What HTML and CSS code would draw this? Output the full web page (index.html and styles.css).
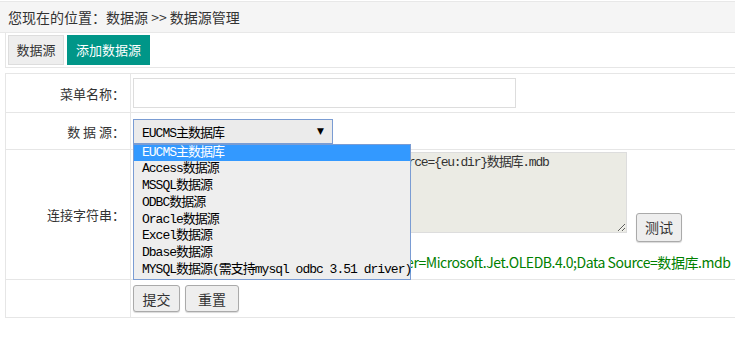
FILE: index.html
```html
<!DOCTYPE html>
<html lang="zh-CN">
<head>
  <meta charset="UTF-8" />
  <title>数据源管理</title>
  <link rel="stylesheet" href="styles.css">
</head>
<body>
  <div class="crumb">您现在的位置：数据源 &gt;&gt; 数据源管理</div>

  <div class="tabs">
    <a class="tab" href="#">数据源</a><a class="tab tab-on" href="#">添加数据源</a>
  </div>

  <table class="form">
    <tr class="row-name">
      <th>菜单名称：</th>
      <td><input class="txt" type="text" /></td>
    </tr>
    <tr class="row-src">
      <th>数 据 源：</th>
      <td>
        <div class="dd">
          <div class="dd-box">
            <span>EUCMS主数据库</span>
            <span class="dd-arrow">▼</span>
          </div>
          <!-- opened option list, drawn over the rows below -->
          <ul class="dd-list">
            <li class="on">EUCMS主数据库</li>
            <li>Access数据源</li>
            <li>MSSQL数据源</li>
            <li>ODBC数据源</li>
            <li>Oracle数据源</li>
            <li>Excel数据源</li>
            <li>Dbase数据源</li>
            <li>MYSQL数据源(需支持mysql odbc 3.51 driver)</li>
          </ul>
        </div>
      </td>
    </tr>
    <tr class="row-conn">
      <th>连接字符串：</th>
      <td>
        <textarea class="conn">Provider=Microsoft.Jet.OLEDB.4.0;Data Source={eu:dir}数据库.mdb</textarea><button class="btn btn-test" type="button">测试</button>
        <div class="tip">Access数据库连接字符串格式如下：Provider=Microsoft.Jet.OLEDB.4.0;Data Source=数据库.mdb</div>
      </td>
    </tr>
    <tr class="row-act">
      <th></th>
      <td>
        <button class="btn btn-ok" type="submit">提交</button><button class="btn btn-reset" type="reset">重置</button>
      </td>
    </tr>
  </table>
</body>
</html>
```

FILE: styles.css
```css
body {
  margin: 0;
  font-family: "Noto Sans CJK SC", sans-serif;
  font-size: 13px;
  color: #333;
  background: #fff;
  overflow: hidden;
}

/* breadcrumb strip */
.crumb {
  margin-top: 1px;
  height: 30px;
  line-height: 30px;
  padding-left: 8px;
  font-size: 14px;
  background: #f5f5f5;
  border-top: 1px solid #e8e8e8;
  border-bottom: 1px solid #e8e8e8;
}

.tabs {
  margin-left: 5px;
  width: 760px;
  padding: 2px 0 2px 2px;
  border-left: 1px solid #e6e6e6;
  border-bottom: 1px solid #e6e6e6;
  display: flex;
  gap: 3px;
}

.tab {
  display: block;
  height: 30px;
  line-height: 30px;
  box-sizing: border-box;
  text-decoration: none;
  font-size: 13px;
  color: #333;
}

.tab:first-child {
  width: 56px;
  text-align: center;
  background: #eee;
  border: 1px solid #ddd;
  line-height: 28px;
}

.tab-on {
  width: 83px;
  text-align: center;
  background: #009688;
  color: #fff;
}

/* form table */
.form {
  margin: 5px 0 0 5px;
  width: 760px;
  border-collapse: collapse;
}

.form th,
.form td {
  border: 1px solid #e6e6e6;
  vertical-align: middle;
  padding: 0 0 0 2px;
}

.form th {
  width: 119px;
  padding: 0 5px 0 0;
  text-align: right;
  font-weight: normal;
  font-size: 13px;
  color: #333;
}

.row-name { height: 39px; }
.row-src { height: 37px; }
.row-conn { height: 130px; }
.row-act { height: 38px; }

.txt {
  display: block;
  width: 383px;
  height: 30px;
  box-sizing: border-box;
  margin: 0;
  border: 1px solid #ddd;
  background: #fff;
}

/* fake open select */
.dd {
  position: relative;
  width: 200px;
}

.dd-box {
  height: 25px;
  box-sizing: border-box;
  border: 1px solid #7a9cd3;
  background: #ebebeb;
  display: flex;
  align-items: center;
  justify-content: space-between;
  padding: 0 8px 0 8px;
  font-family: "Liberation Mono", "Noto Sans CJK SC", monospace;
  font-size: 13px;
  letter-spacing: -1px;
  color: #000;
}

.dd-arrow {
  font-family: "DejaVu Sans", sans-serif;
  font-size: 9px;
  letter-spacing: 0;
}

.dd-list {
  position: absolute;
  top: 25px;
  left: 0;
  z-index: 5;
  width: 278px;
  box-sizing: border-box;
  margin: 0;
  padding: 0;
  list-style: none;
  border: 1px solid #7a9cd3;
  background: #eeeeee;
  font-family: "Liberation Mono", "Noto Sans CJK SC", monospace;
  font-size: 13px;
  letter-spacing: -1px;
  color: #000;
}

.dd-list li {
  height: 16.75px;
  line-height: 16.75px;
  padding-left: 8px;
  white-space: nowrap;
}

.dd-list li.on {
  background: #3399ff;
  color: #fff;
}

/* connection string cell */
.row-conn td {
  vertical-align: top;
  padding-top: 2px;
}

.conn {
  width: 494px;
  height: 81px;
  box-sizing: border-box;
  margin: 0;
  padding: 2px 3px;
  border: 1px solid #ddd;
  background: #ebebe4;
  font-family: "Liberation Mono", "Noto Sans CJK SC", monospace;
  font-size: 13px;
  line-height: 16px;
  letter-spacing: -1.2px;
  color: #333;
  vertical-align: baseline;
}

.tip {
  margin-top: 10px;
  font-size: 14px;
  letter-spacing: -0.45px;
  text-indent: 17px;
  color: #008000;
  white-space: nowrap;
}

.btn {
  box-sizing: border-box;
  height: 29px;
  margin: 0;
  padding: 0;
  font-family: "Noto Sans CJK SC", sans-serif;
  font-size: 14px;
  color: #333;
  background: #eee;
  border: 1px solid #aaa;
  border-radius: 3px;
  box-shadow: 0 1px 1px rgba(0, 0, 0, 0.15);
}

.btn-test {
  width: 46px;
  margin-left: 9px;
}

.btn-ok {
  width: 47px;
  height: 27px;
}

.btn-reset {
  width: 54px;
  height: 27px;
  margin-left: 5px;
}
```
